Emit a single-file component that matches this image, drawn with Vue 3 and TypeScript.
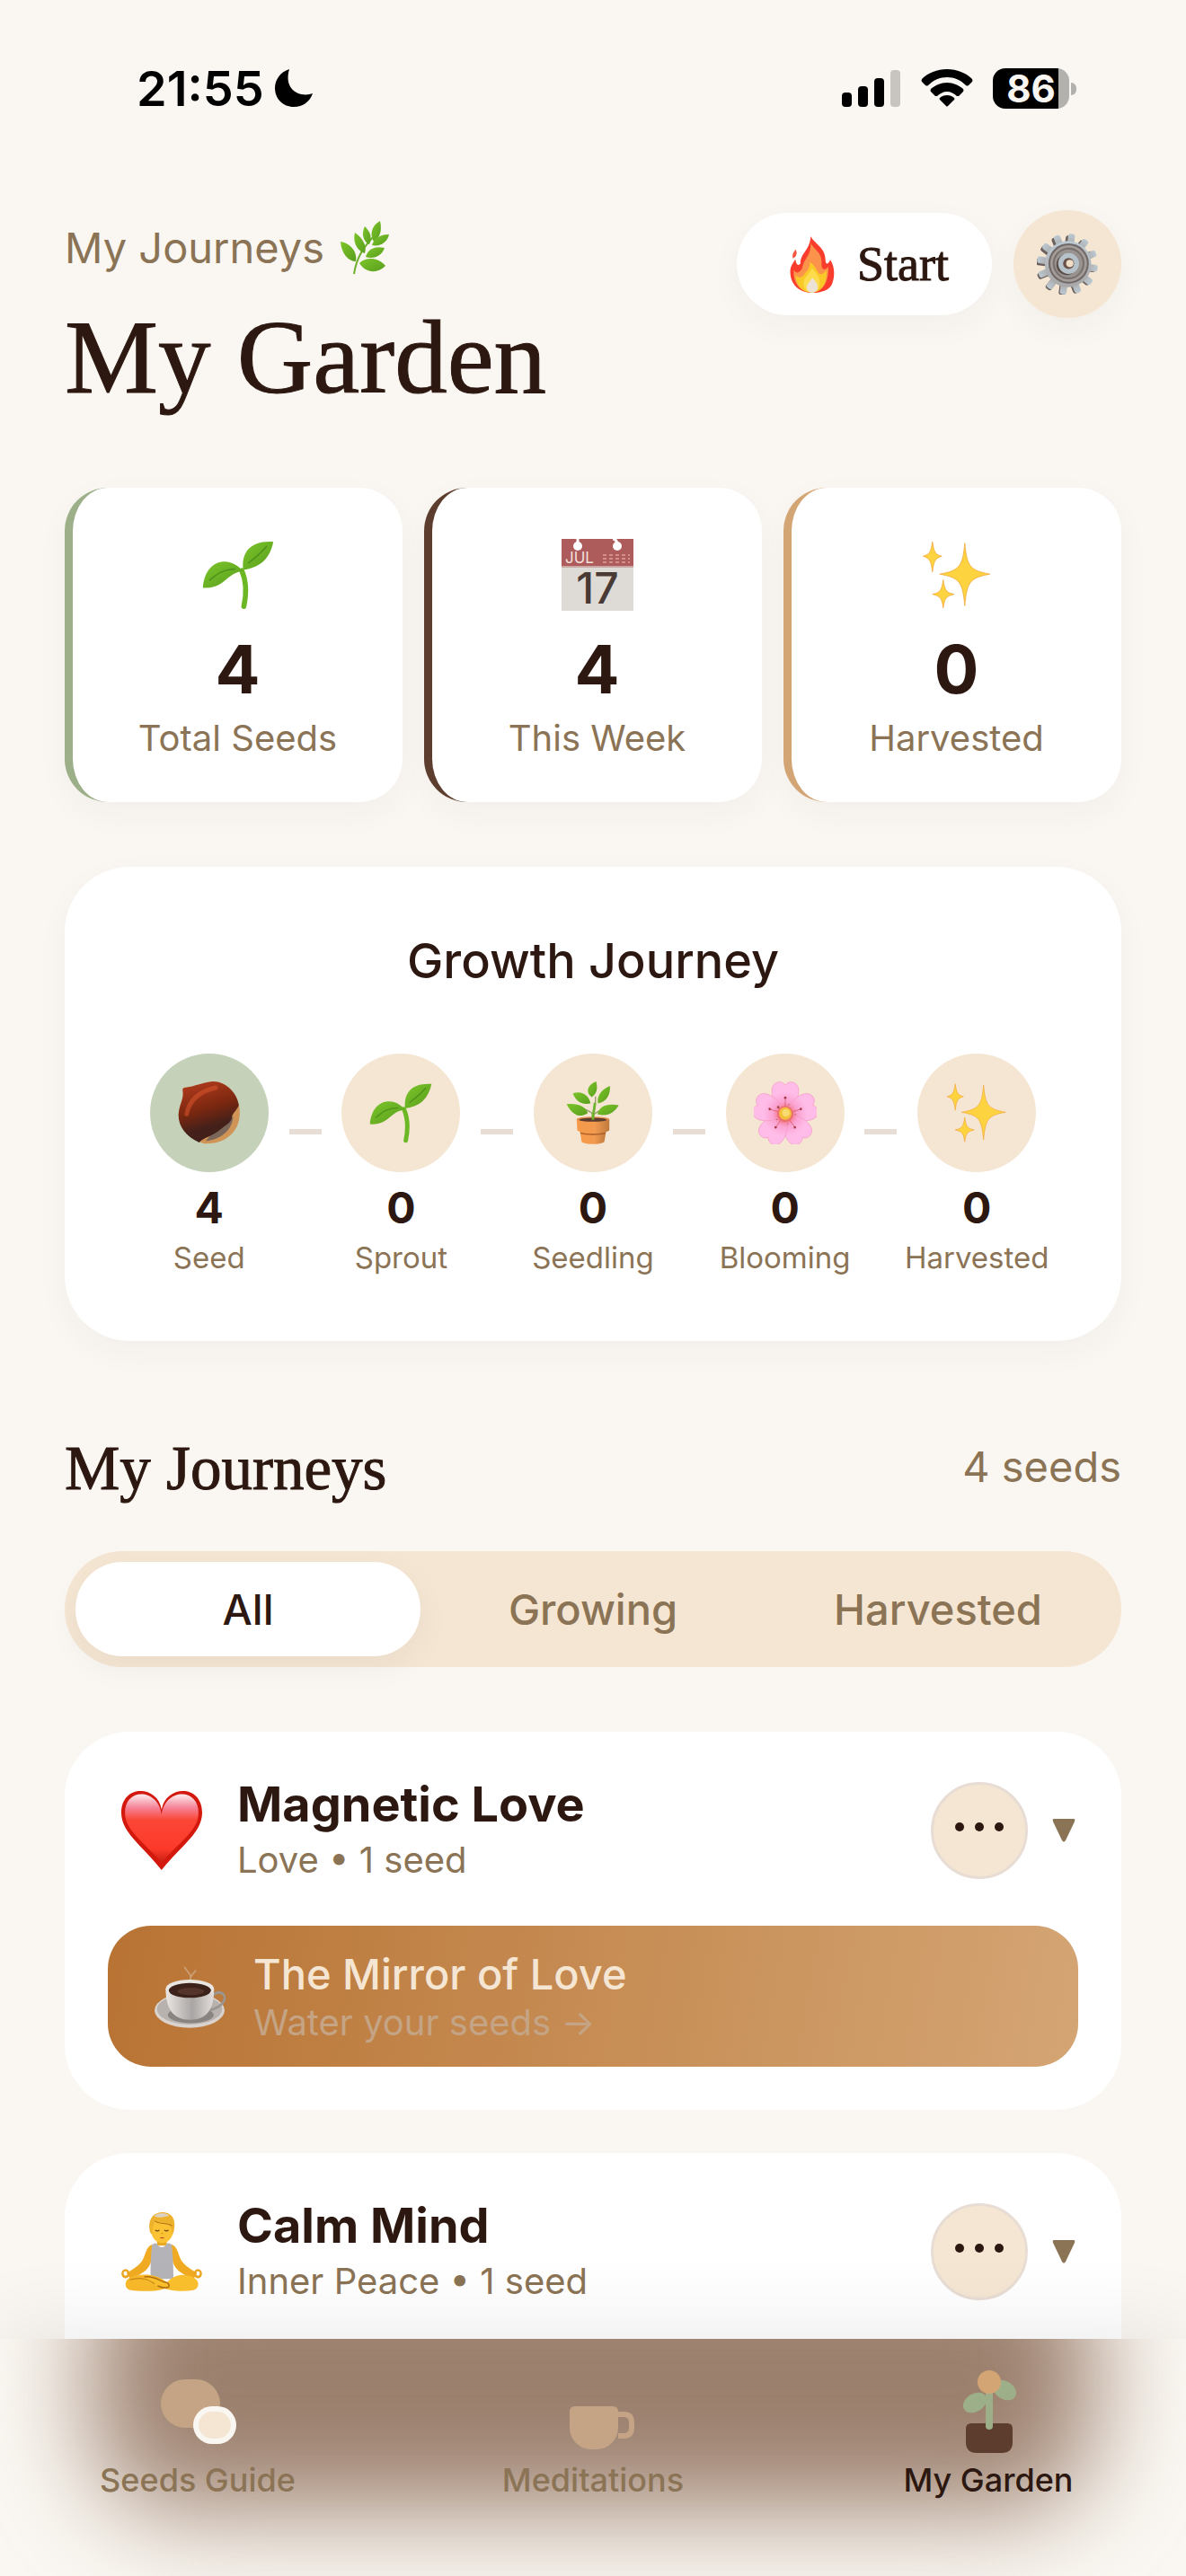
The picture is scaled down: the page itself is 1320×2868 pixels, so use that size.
<script setup lang="ts">
import { ref } from 'vue'

interface Stat { icon: string; value: number; label: string; tone: string }
interface Stage { icon: string; count: number; label: string; active: boolean }
interface Journey { icon: string; title: string; meta: string; meditation?: string }
interface NavItem { id: string; label: string }

const stats: Stat[] = [
  { icon: 'sprout', value: 4, label: 'Total Seeds', tone: 'sage' },
  { icon: 'calendar', value: 4, label: 'This Week', tone: 'cocoa' },
  { icon: 'sparkles', value: 0, label: 'Harvested', tone: 'gold' },
]

const stages: Stage[] = [
  { icon: 'chestnut', count: 4, label: 'Seed', active: true },
  { icon: 'sprout', count: 0, label: 'Sprout', active: false },
  { icon: 'potted', count: 0, label: 'Seedling', active: false },
  { icon: 'blossom', count: 0, label: 'Blooming', active: false },
  { icon: 'sparkles', count: 0, label: 'Harvested', active: false },
]

const tabs: string[] = ['All', 'Growing', 'Harvested']
const activeTab = ref('All')

const journeys: Journey[] = [
  { icon: 'heart', title: 'Magnetic Love', meta: 'Love • 1 seed', meditation: 'The Mirror of Love' },
  { icon: 'yogi', title: 'Calm Mind', meta: 'Inner Peace • 1 seed' },
]

const navItems: NavItem[] = [
  { id: 'seeds', label: 'Seeds Guide' },
  { id: 'meditations', label: 'Meditations' },
  { id: 'garden', label: 'My Garden' },
]
const activeNav = ref('garden')

const teeth: number[] = Array.from({ length: 12 }, (_, i) => i * 30 + 8)
const petals: number[] = [0, 72, 144, 216, 288]
</script>

<template>
  <div class="app">
    <svg class="defs" aria-hidden="true" width="0" height="0">
      <defs>
        <linearGradient id="g-leaf" x1="0" y1="0" x2="1" y2="1">
          <stop offset="0" stop-color="#7cc52a" />
          <stop offset="1" stop-color="#5a9e1e" />
        </linearGradient>
        <linearGradient id="g-steel" x1="0" y1="0" x2="0" y2="1">
          <stop offset="0" stop-color="#bccad3" />
          <stop offset="1" stop-color="#a9a6a6" />
        </linearGradient>
        <linearGradient id="g-nut" x1="0.3" y1="0" x2="0.6" y2="1">
          <stop offset="0" stop-color="#b03a1c" />
          <stop offset="0.45" stop-color="#7a2710" />
          <stop offset="0.75" stop-color="#43201a" />
        </linearGradient>
        <linearGradient id="g-pot" x1="0" y1="0" x2="1" y2="0">
          <stop offset="0" stop-color="#f79a48" />
          <stop offset="0.55" stop-color="#f29a50" />
          <stop offset="1" stop-color="#bf7a3d" />
        </linearGradient>
        <linearGradient id="g-heart" x1="0" y1="0" x2="0" y2="1">
          <stop offset="0.02" stop-color="#fbe3e6" />
          <stop offset="0.2" stop-color="#f58296" />
          <stop offset="0.38" stop-color="#fb4636" />
          <stop offset="0.8" stop-color="#fd3a2a" />
          <stop offset="1" stop-color="#c81f12" />
        </linearGradient>
        <linearGradient id="g-china" x1="0" y1="0" x2="1" y2="0">
          <stop offset="0" stop-color="#ece7e3" />
          <stop offset="0.55" stop-color="#a9a5a4" />
          <stop offset="1" stop-color="#e4dfdc" />
        </linearGradient>
        <radialGradient id="g-petal" cx="50" cy="50" r="50" gradientUnits="userSpaceOnUse">
          <stop offset="0.15" stop-color="#f3707f" />
          <stop offset="0.4" stop-color="#fba3d2" />
          <stop offset="0.7" stop-color="#ffbce8" />
        </radialGradient>

        <symbol id="herb" viewBox="0 0 54 60">
          <path d="M15 59 C18 40 26 28 40 14" fill="none" stroke="#6fb02e" stroke-width="2" />
          <g fill="url(#g-leaf)">
            <path d="M44 0 C33 6 33 17 37 23 C45 18 46 9 44 0Z" />
            <path d="M27 6 C22 16 27 24 32 26 C36 17 32 11 27 6Z" />
            <path d="M54 15 C42 15 37 21 35 27 C44 29 52 24 54 15Z" />
            <path d="M16 13 C13 25 20 34 27 36 C30 26 23 18 16 13Z" />
            <path d="M49 30 C36 27 30 33 28 40 C37 43 46 39 49 30Z" />
            <path d="M0 23 C1 37 9 45 17 45 C19 34 11 25 0 23Z" />
            <path d="M50 50 C42 40 28 40 21 47 C27 57 40 60 50 50Z" />
          </g>
        </symbol>

        <symbol id="fire" viewBox="0 0 146 188">
          <path d="M68 0C80 26 117 36 117 80c0 14 8 16 16-2 13 20 17 50 7 77-7 23-35 33-68 33-42 0-72-28-72-70 0-18 8-26 17-42 2 18 9 24 17 15C32 58 66 46 68 0Z" fill="#f93c2b" />
          <path d="M18 44C8 56 6 64 9 74 22 66 24 56 18 44Z" fill="#f9543f" />
          <path d="M68 22c10 24 38 30 36 68-2 22 14 26 22 10 4 40-12 86-54 86-40 0-64-32-60-74 8 14 20 10 28-6C46 72 70 66 68 22Z" fill="#fb944a" />
          <path d="M66 86c22 14 22 40 36 40 10 0 14-8 18-14 4 40-14 75-48 75-34 0-54-27-54-59 6 10 18 12 26 2 8-12 20-16 22-44Z" fill="#f9c928" />
          <path d="M72 106c16 18 26 30 26 50 0 20-10 31-26 31-17 0-28-13-28-31 0-20 20-28 28-50Z" fill="#fcdc4c" />
          <path d="M73 138c12 12 18 20 18 32 0 10-7 17-18 17s-18-7-18-17c0-12 10-18 18-32Z" fill="#ece3d6" />
        </symbol>

        <symbol id="gear" viewBox="0 0 100 100">
          <g fill="#6b605c" transform="translate(-3 2)">
            <rect v-for="a in teeth" :key="a" x="44" y="1" width="11" height="20" rx="4" :transform="`rotate(${a} 50 50)`" />
          </g>
          <g fill="url(#g-steel)">
            <rect v-for="a in teeth" :key="a" x="45" y="0" width="11" height="20" rx="4" :transform="`rotate(${a} 50 50)`" />
            <circle cx="51" cy="50" r="38" />
          </g>
          <circle cx="52" cy="49" r="33" fill="#6f6866" />
          <circle cx="52" cy="49" r="30" fill="#a39c99" />
          <circle cx="52" cy="49" r="26" fill="#77706d" />
          <circle cx="52" cy="49" r="23" fill="#989290" />
          <circle cx="49" cy="51" r="17" fill="#5c4d48" />
          <circle cx="52" cy="49" r="17" fill="#b6c2ca" />
          <circle cx="52" cy="49" r="9" fill="#6a5148" />
          <circle cx="54" cy="49" r="6" fill="#f0ddc8" />
        </symbol>

        <symbol id="sprout" viewBox="0 0 100 100">
          <path d="M55 44C63 62 61 80 58 94" fill="none" stroke="#6cb824" stroke-width="7" stroke-linecap="round" />
          <path d="M57 43C54 18 68 2 99 4 94 28 80 40 57 43Z" fill="url(#g-leaf)" />
          <path d="M57 45C38 22 4 28 1 68 32 70 34 46 57 45Z" fill="url(#g-leaf)" />
          <path d="M64 34C74 26 82 20 90 10M10 58C22 46 34 42 46 42" fill="none" stroke="#4f921a" stroke-width="2" />
        </symbol>

        <symbol id="calendar" viewBox="0 0 80 80">
          <rect width="80" height="80" fill="#dedad6" />
          <rect width="80" height="31" fill="#ad5b5b" />
          <rect y="30" width="80" height="2" fill="#c9a7a2" />
          <circle cx="18" cy="8" r="5" fill="#fff" />
          <circle cx="62" cy="8" r="5" fill="#fff" />
          <path d="M18 0V8M57 0Q62 0 62 8" fill="none" stroke="#fff" stroke-width="3" />
          <path d="M46 18H76M46 22H76M46 26H76" stroke="#d1908c" stroke-width="2" stroke-dasharray="4 3" />
          <text x="4" y="27" font-family="Inter, sans-serif" font-size="17" fill="#f3e1dd">JUL</text>
          <text x="40" y="72" text-anchor="middle" font-family="Inter, sans-serif" font-weight="500" font-size="48" fill="#4a3a36">17</text>
        </symbol>

        <symbol id="sparkles" viewBox="0 0 100 100">
          <g fill="#fdd43f" stroke="#f3a73c" stroke-width="1">
            <path d="M61 6C64 38 68 44 96 49 68 54 64 60 61 93 58 60 54 54 26 49 54 44 58 38 61 6Z" />
            <path d="M16 4C18 18 20 22 29 24 20 27 18 30 16 46 14 30 12 27 3 24 12 22 14 18 16 4Z" />
            <path d="M31 57C33 71 35 75 46 77 35 80 33 82 31 96 29 82 27 80 16 77 27 75 29 71 31 57Z" />
          </g>
        </symbol>

        <symbol id="chestnut" viewBox="0 0 100 100">
          <path d="M97 38C104 70 84 100 42 99 34 97 30 92 32 88L90 40Z" fill="#cf9456" />
          <path d="M88 56C86 78 68 92 44 95L60 76Z" fill="#7b665a" />
          <path d="M10 10C28 8 40 1 56 0 76 0 94 18 97 38 92 48 88 50 86 56 86 64 78 68 68 76 54 88 42 88 34 97 12 88 0 70 1 52 2 38 8 30 8 20 8 14 6 12 10 10Z" fill="url(#g-nut)" />
          <path d="M14 52C18 30 34 16 60 10" fill="none" stroke="#d9552e" stroke-width="7" stroke-linecap="round" opacity="0.55" />
        </symbol>

        <symbol id="potted" viewBox="0 0 100 100">
          <path d="M50 60C50 46 55 40 54 24M50 52C44 46 36 44 30 42M52 52C60 46 66 44 74 40" fill="none" stroke="#9a9c70" stroke-width="2" />
          <path d="M50 60C50 48 53 42 53 34" fill="none" stroke="#6fb02e" stroke-width="4" />
          <g fill="url(#g-leaf)">
            <path d="M55 0C40 6 38 18 48 25 58 18 57 8 55 0Z" />
            <path d="M77 7C60 14 56 26 58 35 72 32 78 20 77 7Z" />
            <path d="M18 19C34 14 44 24 46 35 30 38 22 30 18 19Z" />
            <path d="M8 36C26 34 38 40 42 50 28 60 16 52 8 36Z" />
            <path d="M91 38C72 34 60 40 57 52 72 57 84 50 91 38Z" />
          </g>
          <path d="M29 78H71L68 96C62 101 38 101 32 96Z" fill="url(#g-pot)" />
          <path d="M24 60H76V78C68 84 32 84 25 78Z" fill="url(#g-pot)" />
          <path d="M30 82C40 85 60 85 70 82" fill="none" stroke="#a85a28" stroke-width="2" />
          <ellipse cx="50" cy="60" rx="26" ry="4" fill="#e28e4e" />
          <ellipse cx="50" cy="61" rx="22" ry="3" fill="#5d3c2e" />
          <path d="M50 61V50" stroke="#6fb02e" stroke-width="4" />
        </symbol>

        <symbol id="blossom" viewBox="0 0 100 100">
          <g v-for="a in petals" :key="a" :transform="`translate(0 2) rotate(${a} 50 50)`">
            <path d="M50 49C36 44 22 14 32 3 38-3 46-2 50 4 54-2 62-3 68 3 78 14 64 44 50 49Z" fill="url(#g-petal)" stroke="#f59ac4" stroke-width="1" />
            <path d="M50 40V25" stroke="#cf5468" stroke-width="1" />
            <circle cx="50" cy="24" r="2" fill="#a83c48" />
            <circle cx="57" cy="36" r="2" fill="#a0453f" />
          </g>
          <circle cx="50" cy="52" r="13" fill="#ee6f70" />
          <circle cx="50" cy="51" r="10" fill="#f4bf3a" />
          <circle cx="51" cy="50" r="6" fill="#f8dc72" />
        </symbol>

        <symbol id="heart" viewBox="0 0 265 239" preserveAspectRatio="none">
          <path d="M132 56C118-20 0-20 0 66c0 60 70 100 132 173C195 166 265 126 265 66 265-20 148-20 132 56Z" fill="#d3180d" />
          <path d="M132 72C122-8 12-12 12 66c0 54 62 88 120 150C190 154 253 120 253 66 253-12 142-8 132 72Z" fill="url(#g-heart)" />
        </symbol>

        <symbol id="coffee" viewBox="0 0 238 187" preserveAspectRatio="none">
          <path d="M118 46C124 24 110 24 100 6M118 40C122 26 130 24 136 16" fill="none" stroke="#dcc5ad" stroke-width="5" opacity="0.5" stroke-linecap="round" />
          <ellipse cx="116" cy="134" rx="116" ry="52" fill="#d9d2cd" />
          <ellipse cx="116" cy="131" rx="108" ry="45" fill="#b8b2af" />
          <ellipse cx="120" cy="148" rx="76" ry="24" fill="#8a8481" />
          <path d="M196 88C214 72 240 86 230 106 220 124 200 130 180 134" fill="none" stroke="#9c9693" stroke-width="8" />
          <path d="M37 70C37 130 62 162 117 162 174 162 197 130 197 70Z" fill="url(#g-china)" />
          <ellipse cx="117" cy="70" rx="80" ry="27" fill="#e9e5e1" />
          <ellipse cx="117" cy="75" rx="70" ry="22" fill="#3d221b" />
          <ellipse cx="120" cy="78" rx="44" ry="11" fill="#55352b" />
        </symbol>

        <symbol id="yogi" viewBox="0 0 267 232" preserveAspectRatio="none">
          <path d="M102 94C78 102 82 130 64 148 52 160 36 168 18 178L28 194C58 186 86 174 96 150L108 118Z" fill="#f0ab22" />
          <path d="M166 94C190 102 186 130 204 148 216 160 232 168 250 178L240 194C210 186 182 174 172 150L160 118Z" fill="#f0ab22" />
          <path d="M118 76H150V98H118Z" fill="#e9a823" />
          <path d="M102 94C112 90 114 90 118 92 124 106 144 106 150 92 156 90 160 92 166 94 170 120 172 150 172 196H97C96 150 98 120 102 94Z" fill="#b4b4b8" />
          <path d="M34 190C8 198 8 224 30 229 70 234 130 232 150 222L150 206C120 180 64 178 34 190Z" fill="#f8b92a" />
          <path d="M234 190C260 198 260 224 238 229 200 234 160 230 136 222 100 210 76 200 76 190 110 182 130 206 150 206 180 180 208 180 234 190Z" fill="#fbc02d" />
          <path d="M150 206C170 218 150 228 120 216M76 190C110 184 130 206 150 206" fill="none" stroke="#b06d12" stroke-width="4" />
          <path d="M28 198C70 188 90 198 110 210" fill="none" stroke="#c98619" stroke-width="3" />
          <circle cx="14" cy="180" r="10" fill="none" stroke="#eba51f" stroke-width="7" />
          <circle cx="253" cy="180" r="10" fill="none" stroke="#eba51f" stroke-width="7" />
          <ellipse cx="135" cy="54" rx="36" ry="36" fill="#fbc334" />
          <path d="M96 60C86 30 98 2 134 0 172 0 182 26 173 58L168 66C168 44 160 34 146 34 126 36 112 26 110 26 108 40 102 44 102 66Z" fill="#eeb12c" />
          <path d="M108 12C122 0 146 0 158 10 146 14 126 18 108 12Z" fill="#ddd2bf" />
          <path d="M110 26C126 36 150 30 168 40" fill="none" stroke="#b27718" stroke-width="3" />
          <path d="M112 52Q119 58 126 52M142 52Q149 58 156 52" fill="none" stroke="#6e4712" stroke-width="3" />
          <path d="M126 74H144Q135 80 126 74Z" fill="#c0391d" />
          <path d="M132 62H138" stroke="#d28f1c" stroke-width="3" />
        </symbol>
      </defs>
    </svg>

    <div class="status">
      <div class="status-left">
        <span class="clock">21:55</span>
        <svg class="moon" width="42" height="42" viewBox="0 0 42 42" aria-hidden="true">
          <path d="M16 0C6 3 0 12 0 21c0 12 9 21 21 21 10 0 18-6 21-15C29 32 9 24 16 0Z" fill="#000" />
        </svg>
      </div>
      <div class="status-right">
        <svg width="66" height="42" viewBox="0 0 66 42" aria-hidden="true">
          <rect y="26" width="11" height="16" rx="4" />
          <rect x="18" y="19" width="11" height="23" rx="4" />
          <rect x="36" y="10" width="11" height="32" rx="4" />
          <rect x="54" y="1" width="11" height="41" rx="4" fill="#c8c5c1" />
        </svg>
        <svg width="58" height="42" viewBox="0 0 58 42" aria-hidden="true">
          <path d="M29 0C40 0 50 4 57 11Q58 13 57 14L53 18Q51 19 50 18C44 12 37 9 29 9S14 12 8 18Q7 19 5 18L1 14Q0 13 1 11C8 4 18 0 29 0Z" />
          <path d="M29 15C36 15 42 18 47 22Q48 24 47 25L42 30Q41 30 40 30C37 27 33 25 29 25S21 27 18 30Q17 30 16 30L11 25Q10 24 11 22C16 18 22 15 29 15Z" />
          <path d="M29 29C32 29 35 30 37 32Q38 33 37 34L30 41Q29 42 28 41L21 34Q20 33 21 32C23 30 26 29 29 29Z" />
        </svg>
        <div class="battery">
          <span>86</span>
        </div>
      </div>
    </div>

    <main class="content">
      <header class="top">
        <div>
          <p class="eyebrow">My Journeys <svg width="54" height="60" aria-hidden="true"><use href="#herb" /></svg></p>
          <h1>My Garden</h1>
        </div>
        <div class="actions">
          <button class="start" type="button">
            <svg width="72" height="63" aria-hidden="true"><use href="#fire" /></svg>
            <span>Start</span>
          </button>
          <button class="settings" type="button" aria-label="Settings">
            <svg width="68" height="68" aria-hidden="true"><use href="#gear" /></svg>
          </button>
        </div>
      </header>

      <section class="stats" aria-label="Totals">
        <div v-for="s in stats" :key="s.label" class="stat" :class="s.tone">
          <div class="stat-icon">
            <svg width="80" height="80" aria-hidden="true"><use :href="`#${s.icon}`" /></svg>
          </div>
          <strong>{{ s.value }}</strong>
          <span>{{ s.label }}</span>
        </div>
      </section>

      <section class="growth">
        <h2>Growth Journey</h2>
        <div class="stages">
          <template v-for="(g, i) in stages" :key="g.label">
            <div v-if="i > 0" class="dash"></div>
            <div class="stage">
              <div class="bubble" :class="{ active: g.active }">
                <svg width="70" height="70" aria-hidden="true"><use :href="`#${g.icon}`" /></svg>
              </div>
              <strong>{{ g.count }}</strong>
              <span>{{ g.label }}</span>
            </div>
          </template>
        </div>
      </section>

      <section class="journeys">
        <div class="section-head">
          <h2>My Journeys</h2>
          <span>4 seeds</span>
        </div>
        <div class="tabs">
          <button
            v-for="t in tabs"
            :key="t"
            type="button"
            :class="{ active: t === activeTab }"
            @click="activeTab = t"
          >{{ t }}</button>
        </div>

        <article v-for="j in journeys" :key="j.title" class="card">
          <div class="card-head">
            <div class="card-icon">
              <svg width="90" height="88" aria-hidden="true"><use :href="`#${j.icon}`" /></svg>
            </div>
            <div class="card-text">
              <h3>{{ j.title }}</h3>
              <p>{{ j.meta }}</p>
            </div>
            <button class="more" type="button" aria-label="More options">
              <svg width="54" height="10" viewBox="0 0 54 10" aria-hidden="true">
                <circle cx="5" cy="5" r="5" /><circle cx="27" cy="5" r="5" /><circle cx="49" cy="5" r="5" />
              </svg>
            </button>
            <button class="toggle" type="button" aria-label="Collapse">
              <svg width="26" height="26" viewBox="0 0 26 26" aria-hidden="true">
                <path d="M2 0H24Q26 0 25 3L15 24Q13 27 11 24L1 3Q0 0 2 0Z" fill="#8b7355" />
              </svg>
            </button>
          </div>
          <button v-if="j.meditation" class="banner" type="button">
            <svg width="80" height="70" aria-hidden="true"><use href="#coffee" /></svg>
            <span class="banner-text">
              <span class="banner-title">{{ j.meditation }}</span>
              <span class="banner-sub">Water your seeds →</span>
            </span>
          </button>
        </article>
      </section>
    </main>

    <nav class="nav">
      <div class="glow"></div>
      <a
        v-for="n in navItems"
        :key="n.id"
        href="#"
        :class="{ active: n.id === activeNav }"
        @click.prevent="activeNav = n.id"
      >
        <svg v-if="n.id === 'seeds'" width="96" height="96" viewBox="0 0 96 96" aria-hidden="true">
          <rect x="7" y="9" width="66" height="54" rx="27" fill="#c4a484" />
          <rect x="43" y="39" width="48" height="42" rx="21" fill="#faf7f2" />
          <rect x="49" y="45" width="36" height="30" rx="15" fill="#f5e6d3" />
        </svg>
        <svg v-else-if="n.id === 'meditations'" width="96" height="96" viewBox="0 0 96 96" aria-hidden="true">
          <path d="M28 39H70Q76 39 76 45V63A24 24 0 0 1 52 87H46A24 24 0 0 1 22 63V45Q22 39 28 39Z" fill="#c4a484" />
          <path d="M76 48H82Q91 48 91 57V63Q91 72 82 72H76" fill="none" stroke="#c4a484" stroke-width="6" />
        </svg>
        <svg v-else width="96" height="96" viewBox="0 0 96 96" aria-hidden="true">
          <path d="M29 58H69Q75 58 75 64V79Q75 91 63 91H35Q23 91 23 79V64Q23 58 29 58Z" fill="#5c3d2e" />
          <rect x="45" y="20" width="8" height="45" rx="4" fill="#9caf88" />
          <ellipse cx="33" cy="35" rx="14" ry="10" transform="rotate(-32 33 35)" fill="#9caf88" />
          <ellipse cx="66" cy="21" rx="14" ry="10" transform="rotate(-148 66 21)" fill="#9caf88" />
          <circle cx="49" cy="12" r="13" fill="#d4a574" />
        </svg>
        <span>{{ n.label }}</span>
      </a>
    </nav>
  </div>
</template>

<style>
body {
  background: #faf7f2;
}
</style>

<style scoped>
.app {
  display: flex;
  flex-direction: column;
  height: 100vh;
  background: #faf7f2;
  color: #2c1810;
  font-family: Inter, "Noto Sans", sans-serif;
}
.defs {
  position: absolute;
}
svg {
  display: block;
  overflow: visible;
}
button {
  font: inherit;
  color: inherit;
  border: 0;
  padding: 0;
  background: none;
  cursor: pointer;
}
h1, h2, h3, p {
  margin: 0;
}

.status {
  flex: none;
  display: flex;
  justify-content: space-between;
  align-items: center;
  height: 196px;
  padding: 0 122px 0 152px;
  color: #000;
}
.status-left {
  display: flex;
  align-items: center;
  gap: 12px;
}
.clock {
  font-size: 54px;
  font-weight: 600;
}
.status-right {
  display: flex;
  align-items: center;
  gap: 22px;
}
.battery {
  position: relative;
  display: flex;
  align-items: center;
  justify-content: center;
  width: 85px;
  height: 45px;
  margin-right: 8px;
  border-radius: 14px;
  background: linear-gradient(90deg, #000 73px, #b3b1ae 73px);
  color: #faf7f2;
  font-size: 42px;
  font-weight: 700;
}
.battery::after {
  content: "";
  position: absolute;
  left: 87px;
  top: 16px;
  width: 6px;
  height: 14px;
  border-radius: 0 6px 6px 0;
  background: #b3b1ae;
}

.content {
  flex: 1;
  min-height: 0;
  overflow: hidden;
  padding: 38px 72px 0;
}
.top {
  display: flex;
  justify-content: space-between;
  align-items: flex-start;
  margin-bottom: 66px;
}
.eyebrow {
  display: flex;
  align-items: center;
  gap: 18px;
  font-size: 47px;
  line-height: 84px;
  color: #8b7355;
}
h1,
.start,
.section-head h2 {
  font-family: "Liberation Serif", serif;
  font-weight: 400;
  -webkit-text-stroke: 1px currentColor;
}
h1 {
  font-size: 117px;
  line-height: 159px;
}
.actions {
  display: flex;
  align-items: center;
  gap: 24px;
}
.start {
  display: flex;
  align-items: center;
  gap: 14px;
  height: 114px;
  padding: 0 48px;
  border-radius: 57px;
  background: #fff;
  box-shadow: 0 12px 36px rgba(44, 24, 16, 0.04);
  font-size: 54px;
}
.settings {
  display: flex;
  align-items: center;
  justify-content: center;
  width: 120px;
  height: 120px;
  border-radius: 50%;
  background: #f5e6d3;
  box-shadow: 0 12px 36px rgba(44, 24, 16, 0.04);
}

.stats {
  display: flex;
  gap: 24px;
  margin-bottom: 72px;
}
.stat {
  flex: 1;
  display: flex;
  flex-direction: column;
  align-items: center;
  padding: 48px 0 44px;
  border-left: 9px solid;
  border-radius: 48px;
  background: #fff;
  box-shadow: 0 12px 36px rgba(44, 24, 16, 0.04);
}
.stat.sage { border-color: #9caf88; }
.stat.cocoa { border-color: #5c3d2e; }
.stat.gold { border-color: #d4a574; }
.stat-icon {
  display: flex;
  align-items: center;
  height: 98px;
}
.stat strong {
  margin-top: 6px;
  font-size: 74px;
  font-weight: 700;
  line-height: 100px;
  color: #2c1810;
}
.stat span {
  font-size: 40px;
  line-height: 54px;
  color: #8b7355;
}

.growth {
  padding: 72px 72px 66px;
  margin-bottom: 96px;
  border-radius: 72px;
  background: #fff;
  box-shadow: 0 12px 36px rgba(44, 24, 16, 0.04);
}
.growth h2 {
  margin-bottom: 70px;
  font-size: 54px;
  font-weight: 500;
  line-height: 66px;
  text-align: center;
}
.stages {
  display: flex;
  align-items: flex-start;
}
.stage {
  flex: 1 0 0;
  min-width: 0;
  display: flex;
  flex-direction: column;
  align-items: center;
}
.bubble {
  display: flex;
  align-items: center;
  justify-content: center;
  width: 132px;
  height: 132px;
  margin-bottom: 12px;
  border-radius: 50%;
  background: #f5e6d3;
}
.bubble.active {
  background: #c5d1b8;
}
.stage strong {
  font-size: 48px;
  font-weight: 700;
  line-height: 56px;
}
.stage span {
  font-size: 33px;
  line-height: 54px;
  color: #8b7355;
}
.dash {
  flex: none;
  width: 36px;
  height: 6px;
  margin-top: 84px;
  background: #e8ddd4;
}

.section-head {
  display: flex;
  align-items: center;
  justify-content: space-between;
  margin-bottom: 46px;
}
.section-head h2 {
  font-size: 69px;
  line-height: 92px;
}
.section-head span {
  padding-bottom: 6px;
  font-size: 47px;
  color: #8b7355;
}
.tabs {
  display: flex;
  margin-bottom: 72px;
  padding: 12px;
  border-radius: 64px;
  background: #f5e6d3;
}
.tabs button {
  flex: 1;
  height: 105px;
  border-radius: 52px;
  font-size: 47px;
  font-weight: 500;
  color: #8b7355;
}
.tabs .active {
  background: #fff;
  color: #2c1810;
  box-shadow: 0 12px 36px rgba(44, 24, 16, 0.05);
}

.card {
  margin-bottom: 48px;
  padding: 48px;
  border-radius: 72px;
  background: #fff;
}
.card:last-child {
  padding-bottom: 216px;
}
.card-head {
  display: flex;
  align-items: center;
}
.card-icon {
  display: flex;
  align-items: center;
  justify-content: center;
  width: 120px;
  margin-right: 24px;
}
.card-text {
  flex: 1;
}
.card h3 {
  font-size: 54px;
  font-weight: 700;
  line-height: 66px;
}
.card p {
  font-size: 40px;
  line-height: 58px;
  color: #8b7355;
}
.more {
  display: flex;
  align-items: center;
  justify-content: center;
  box-sizing: border-box;
  width: 108px;
  height: 108px;
  padding-bottom: 8px;
  border: 3px solid #e8ddd4;
  border-radius: 50%;
  background: #f5e6d3;
  fill: #2c1810;
}
.toggle {
  display: flex;
  justify-content: center;
  width: 32px;
  margin-left: 24px;
}
.banner {
  display: flex;
  align-items: center;
  gap: 30px;
  width: 100%;
  margin-top: 44px;
  padding: 24px 52px;
  border-radius: 48px;
  background: linear-gradient(100deg, #b87333, #d4a574);
  text-align: left;
}
.banner-text {
  display: flex;
  flex-direction: column;
}
.banner-title {
  font-size: 47px;
  font-weight: 500;
  line-height: 59px;
  color: #f5e6d3;
}
.banner-sub {
  font-size: 40px;
  line-height: 50px;
  color: #c4a484;
}

.nav {
  position: relative;
  flex: none;
  display: flex;
  height: 264px;
  overflow: hidden;
  background: #faf7f2;
  box-shadow: 0 -12px 90px rgba(0, 0, 0, 0.08);
}
.glow {
  position: absolute;
  top: -100px;
  right: 104px;
  bottom: 74px;
  left: 104px;
  border-radius: 96px;
  background: #9c806e;
  filter: blur(56px);
}
.nav a {
  position: relative;
  flex: 1;
  display: flex;
  flex-direction: column;
  align-items: center;
  padding-top: 36px;
  font-size: 36px;
  font-weight: 500;
  line-height: 50px;
  color: #8b7355;
  text-decoration: none;
}
.nav a.active {
  color: #2c1810;
}
</style>
